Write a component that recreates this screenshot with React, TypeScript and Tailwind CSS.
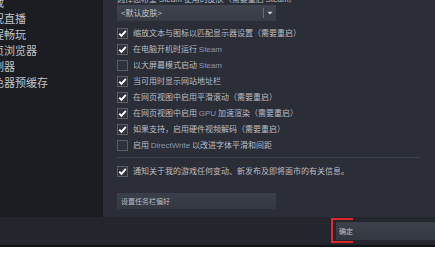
import React from "react";

const cjk = { fontFamily: '"Noto Sans CJK SC", "Noto Sans", sans-serif' };
const mix = { fontFamily: '"Liberation Sans", "Noto Sans CJK SC", sans-serif' };

type Seg = string | { en: string };

const Box = ({ checked }: { checked: boolean }) => (
  <div className="w-[11px] h-[11px] border border-[#5a5e67] bg-[#2f323a] flex items-center justify-center shrink-0">
    {checked && (
      <svg width="9" height="9" viewBox="0 0 9 9">
        <path d="M1.3 4.6 L3.5 6.8 L7.8 1.9" stroke="#ffffff" strokeWidth="1.9" fill="none" />
      </svg>
    )}
  </div>
);

const Row = ({ checked, segs }: { checked: boolean; segs: Seg[] }) => (
  <div className="flex items-center gap-[5px] h-[16px]">
    <Box checked={checked} />
    <span className="text-[8px] leading-[10px] text-[#b9bdc4] whitespace-nowrap" style={mix}>
      {segs.map((s, i) =>
        typeof s === "string" ? (
          <span key={i} style={cjk}>{s}</span>
        ) : (
          <span key={i} className="text-[#8797ad]">{s.en}</span>
        )
      )}
    </span>
  </div>
);

const rows: { checked: boolean; segs: Seg[] }[] = [
  { checked: true, segs: ["缩放文本与图标以匹配显示器设置（需要重启）"] },
  { checked: true, segs: ["在电脑开机时运行 ", { en: "Steam" }] },
  { checked: false, segs: ["以大屏幕模式启动 ", { en: "Steam" }] },
  { checked: true, segs: ["当可用时显示网站地址栏"] },
  { checked: true, segs: ["在网页视图中启用平滑滚动（需要重启）"] },
  { checked: true, segs: ["在网页视图中启用 ", { en: "GPU" }, " 加速渲染（需要重启）"] },
  { checked: true, segs: ["如果支持，启用硬件视频解码（需要重启）"] },
  { checked: false, segs: ["启用 ", { en: "DirectWrite" }, " 以改进字体平滑和间距"] },
];

const side = ["下载", "实况直播", "远程畅玩", "网页浏览器", "控制器", "着色器预缓存"];

export default function App() {
  return (
    <div className="w-[435px] h-[254px] overflow-hidden bg-white flex flex-col" style={cjk}>
      <div className="h-[217px] flex shrink-0">
        <div className="w-[103px] bg-[#1b1d22] overflow-hidden shrink-0">
          <div className="mt-[-6px] ml-[-18px] flex flex-col">
            {side.map((s) => (
              <div key={s} className="h-[16px] leading-[16px] text-[11px] text-[#c0c3c8] whitespace-nowrap">
                {s}
              </div>
            ))}
          </div>
        </div>
        <div className="flex-1 bg-[#2b2e37] overflow-hidden pl-[14px] flex flex-col">
          <div className="h-[5px] overflow-hidden shrink-0">
            <div className="mt-[-6px] text-[8px] leading-[10px] text-[#b9bdc4] whitespace-nowrap" style={mix}>
              <span style={cjk}>选择您希望 </span>Steam<span style={cjk}> 使用的皮肤（需要重启 </span>Steam<span style={cjk}>）</span>
            </div>
          </div>
          <div className="w-[159px] h-[16px] bg-gradient-to-b from-[#40444e] to-[#373b44] flex items-center shrink-0">
            <span className="flex-1 pl-[4px] text-[8px] leading-[10px] text-[#c4c7cc]">&lt;默认皮肤&gt;</span>
            <div className="w-px h-[10px] bg-[#6a6e77]" />
            <div className="w-[12px] flex items-center justify-center">
              <svg width="6" height="4" viewBox="0 0 6 4">
                <path d="M0.5 0.8 L5.5 0.8 L3 3.4 Z" fill="#d6d8dc" />
              </svg>
            </div>
          </div>
          <div className="mt-[4px] flex flex-col">
            {rows.map((r, i) => (
              <Row key={i} checked={r.checked} segs={r.segs} />
            ))}
          </div>
          <div className="mt-[4px] mr-[15px] h-px bg-[#3c4049] shrink-0" />
          <div className="mt-[5px]">
            <Row checked={true} segs={["通知关于我的游戏任何变动、新发布及即将面市的有关信息。"]} />
          </div>
          <div className="mt-[14px] w-[159px] h-[16px] bg-gradient-to-b from-[#3b3f49] to-[#333740] flex items-center pl-[4px] shrink-0">
            <span className="text-[7px] leading-[9px] text-[#b9bdc4] whitespace-nowrap">设置任务栏偏好</span>
          </div>
        </div>
      </div>
      <div className="h-[28px] bg-[#23262d] flex items-center justify-end relative shrink-0">
        <div className="w-[99px] h-[18px] bg-gradient-to-b from-[#3c404a] to-[#343841] flex items-center pl-[3px]">
          <span className="text-[7px] leading-[9px] text-[#c0c3c9]">确定</span>
        </div>
        <div className="absolute left-[331px] top-[1px] w-[22px] h-[25px] border-l-2 border-t-2 border-b-2 border-[#e3262b]" />
      </div>
      <div className="h-[2px] bg-[#111318] shrink-0" />
    </div>
  );
}
